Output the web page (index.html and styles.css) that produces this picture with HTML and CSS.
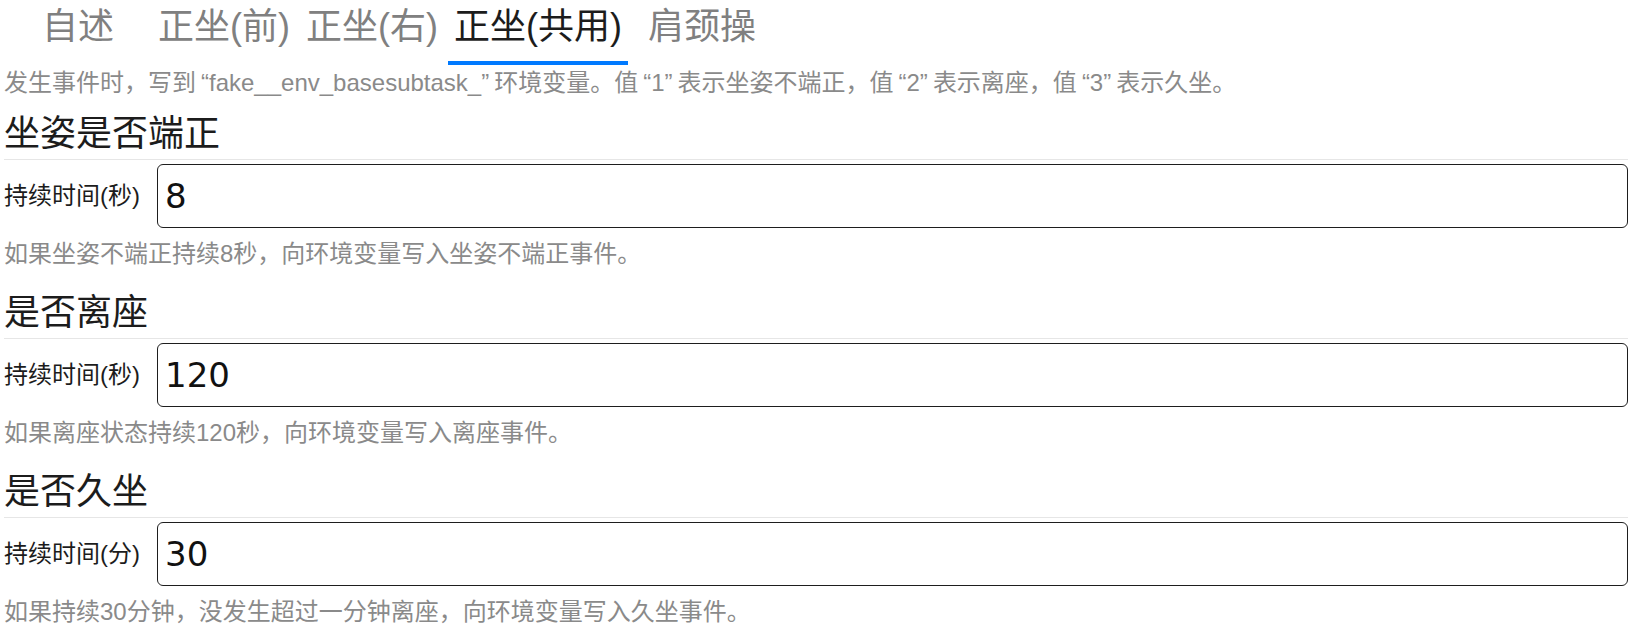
FILE: index.html
```html
<!DOCTYPE html>
<html lang="zh-CN">
<head>
    <meta charset="UTF-8">
    <meta name="viewport" content="width=device-width, initial-scale=1.0">
    <title>正坐(共用)</title>
    <link rel="stylesheet" href="styles.css">
</head>
<body>
    <nav class="tabs">
        <a class="tab tab-first">自述</a>
        <a class="tab">正坐(前)</a>
        <a class="tab">正坐(右)</a>
        <a class="tab active">正坐(共用)</a>
        <a class="tab tab-last">肩颈操</a>
    </nav>

    <p class="intro">发生事件时，写到<span class="qt">“fake__env_basesubtask_”</span>环境变量。值<span class="qt">“1”</span>表示坐姿不端正，值<span class="qt">“2”</span>表示离座，值<span class="qt">“3”</span>表示久坐。</p>

    <section class="setting first">
        <h2>坐姿是否端正</h2>
        <div class="row">
            <label class="row-label" for="posture">持续时间(秒)</label>
            <input class="row-input" id="posture" type="text" value="8">
        </div>
        <p class="hint">如果坐姿不端正持续8秒，向环境变量写入坐姿不端正事件。</p>
    </section>

    <section class="setting">
        <h2>是否离座</h2>
        <div class="row">
            <label class="row-label" for="leave">持续时间(秒)</label>
            <input class="row-input" id="leave" type="text" value="120">
        </div>
        <p class="hint">如果离座状态持续120秒，向环境变量写入离座事件。</p>
    </section>

    <section class="setting">
        <h2>是否久坐</h2>
        <div class="row">
            <label class="row-label" for="sitting">持续时间(分)</label>
            <input class="row-input" id="sitting" type="text" value="30">
        </div>
        <p class="hint">如果持续30分钟，没发生超过一分钟离座，向环境变量写入久坐事件。</p>
    </section>
</body>
</html>
```

FILE: styles.css
```css
body {
    margin: 0;
    padding: 0 7px 0 4px;
    background: #fff;
    color: #1c1c1c;
    font-family: "Liberation Sans", "Noto Sans CJK SC", sans-serif;
}

/* tab bar */
.tabs {
    display: flex;
    gap: 4px;
    padding-left: 32px;
}
.tab {
    padding: 3px 6px 10px;
    font-size: 36px;
    line-height: 48px;
    color: #808080;
    border-bottom: 4px solid transparent;
    white-space: nowrap;
    cursor: pointer;
}
.tab-first {
    margin-right: 28px;
}
.tab-last {
    margin-left: 10px;
}
.tab.active {
    color: #1c1c1c;
    border-bottom-color: #007aff; /* iOS blue */
}

.intro,
.hint {
    margin: 0;
    font-size: 24px;
    line-height: 32px;
    color: #8a8a8a;
}
.intro {
    margin-top: 2px;
}
.qt {
    padding: 0 5px;
}

/* settings */
.setting {
    margin-top: 16px;
}
.setting.first {
    margin-top: 8px;
}
.setting h2 {
    margin: 0;
    padding: 3px 0 1px;
    font-size: 36px;
    line-height: 48px;
    font-weight: normal;
    color: #1c1c1c;
    border-bottom: 1px solid #e6e6e6;
}
.row {
    display: flex;
    align-items: center;
    margin-top: 4px;
}
.row-label {
    flex: none;
    width: 153px;
    font-size: 24px;
    line-height: 32px;
    white-space: nowrap;
    color: #1c1c1c;
}
.row-input {
    flex: 1;
    min-width: 0;
    height: 64px;
    box-sizing: border-box;
    margin: 0;
    padding: 0 7px;
    border: 1px solid #1e1e1e;
    border-radius: 6px;
    background: #fff;
    font-family: "DejaVu Sans", sans-serif;
    font-size: 34px;
    color: #111;
    outline: none;
}
.hint {
    margin-top: 10px;
}
```
